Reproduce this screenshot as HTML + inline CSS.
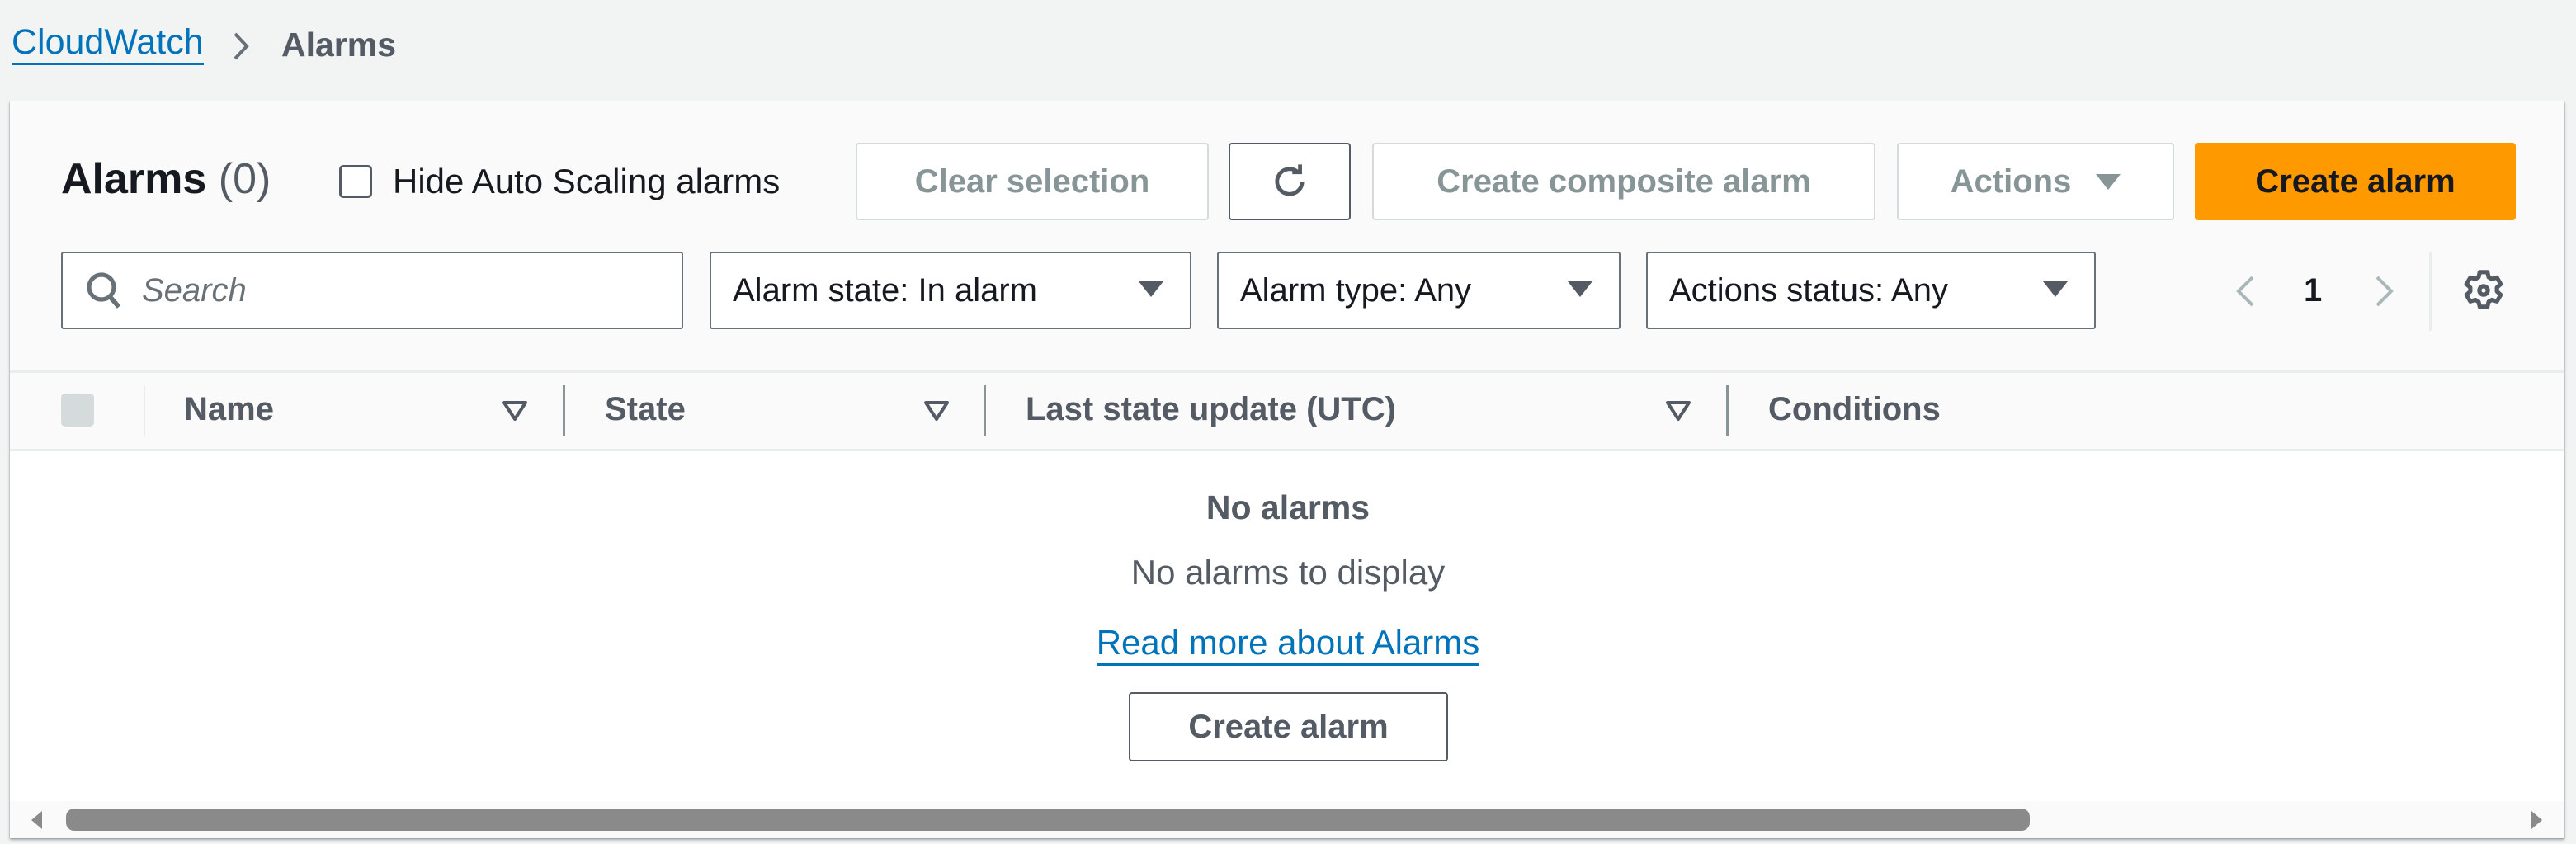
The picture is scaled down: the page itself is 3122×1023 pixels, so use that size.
<!DOCTYPE html>
<html><head><meta charset="utf-8"><style>
*{box-sizing:border-box;margin:0;padding:0}
body{width:3122px;height:1023px;background:#f2f3f3;font-family:"Liberation Sans",sans-serif;position:relative;overflow:hidden;color:#16191f}
.a{position:absolute}
.btn{position:absolute;border:2px solid #d5dbdb;border-radius:4px;background:#fff;color:#879596;font-weight:bold;font-size:40px;display:flex;align-items:center;justify-content:center}
.sel{position:absolute;border:2px solid #687078;border-radius:3px;background:#fff;font-size:40px;display:flex;align-items:center;padding-left:26px}
.car{position:absolute;right:32px;top:34px;width:0;height:0;border-left:15px solid transparent;border-right:15px solid transparent;border-top:19px solid #545b64}
.th{position:absolute;top:474px;font-size:40px;font-weight:bold;color:#545b64}
.dv{position:absolute;top:467px;width:3px;height:62px;background:#879596}
.srt{position:absolute;top:484px}
</style></head><body>
<div class="a" style="left:14px;top:26px;font-size:43px;color:#0073bb;line-height:50px;border-bottom:3px solid #0073bb">CloudWatch</div>
<svg class="a" style="left:280px;top:38px" width="24" height="36" viewBox="0 0 24 36"><path d="M5 3 L19 18 L5 33" fill="none" stroke="#687078" stroke-width="4"/></svg>
<div class="a" style="left:341px;top:31px;font-size:41px;font-weight:bold;color:#545b64">Alarms</div>

<div class="a" style="left:12px;top:123px;width:3096px;height:893px;background:#fafafa;box-shadow:0 2px 3px rgba(0,28,36,.35),0 0 1px rgba(0,28,36,.4)">
 <div class="a" style="left:0;top:421px;width:100%;height:428px;background:#fff;border-top:3px solid #eaeded"></div>
 <div class="a" style="left:0;top:326px;width:100%;border-top:3px solid #eaeded"></div>
</div>

<div class="a" style="left:74px;top:187px;font-size:52px;font-weight:bold;line-height:60px">Alarms <span style="font-weight:normal;color:#545b64">(0)</span></div>
<div class="a" style="left:411px;top:200px;width:40px;height:40px;border:3px solid #545b64;border-radius:5px;background:#fff"></div>
<div class="a" style="left:476px;top:195px;font-size:42px;line-height:50px">Hide Auto Scaling alarms</div>

<div class="btn" style="left:1037px;top:173px;width:428px;height:94px">Clear selection</div>
<div class="btn" style="left:1489px;top:173px;width:148px;height:94px;border-color:#545b64">
<svg width="52" height="52" viewBox="0 0 24 24"><path d="M19 12a7 7 0 1 1-2.2-5.1" fill="none" stroke="#545b64" stroke-width="2.2"/><path d="M13.5 6.8h4.3V2.5" fill="none" stroke="#545b64" stroke-width="2.2"/></svg></div>
<div class="btn" style="left:1663px;top:173px;width:610px;height:94px">Create composite alarm</div>
<div class="btn" style="left:2299px;top:173px;width:336px;height:94px">Actions<span style="display:inline-block;margin-left:30px;width:0;height:0;border-left:15px solid transparent;border-right:15px solid transparent;border-top:19px solid #879596"></span></div>
<div class="btn" style="left:2660px;top:173px;width:389px;height:94px;background:#ff9900;border-color:#ff9900;color:#16191f">Create alarm</div>

<div class="sel" style="left:74px;top:305px;width:754px;height:94px;padding-left:28px">
<svg width="44" height="48" viewBox="0 0 22 24"><circle cx="9.5" cy="10" r="7.5" fill="none" stroke="#687078" stroke-width="2.6"/><path d="M14.8 16 L20 22" stroke="#687078" stroke-width="2.8"/></svg>
<span style="margin-left:24px;font-style:italic;color:#687078">Search</span></div>
<div class="sel" style="left:860px;top:305px;width:584px;height:94px">Alarm state: In alarm<div class="car"></div></div>
<div class="sel" style="left:1475px;top:305px;width:489px;height:94px">Alarm type: Any<div class="car"></div></div>
<div class="sel" style="left:1995px;top:305px;width:545px;height:94px">Actions status: Any<div class="car"></div></div>

<svg class="a" style="left:2708px;top:333px" width="26" height="40" viewBox="0 0 26 40"><path d="M22 3 L5 20 L22 37" fill="none" stroke="#aab7b8" stroke-width="4"/></svg>
<div class="a" style="left:2792px;top:330px;font-size:40px;font-weight:bold">1</div>
<svg class="a" style="left:2877px;top:333px" width="26" height="40" viewBox="0 0 26 40"><path d="M4 3 L21 20 L4 37" fill="none" stroke="#aab7b8" stroke-width="4"/></svg>
<div class="a" style="left:2944px;top:305px;width:3px;height:96px;background:#eaeded"></div>
<svg class="a" style="left:2982px;top:324px" width="56" height="56" viewBox="0 0 24 24"><path d="M10 2.5h4l.6 2.6 1.7 1 2.6-.8 2 3.4-2 1.8v2l2 1.8-2 3.4-2.6-.8-1.7 1-.6 2.6h-4l-.6-2.6-1.7-1-2.6.8-2-3.4 2-1.8v-2l-2-1.8 2-3.4 2.6.8 1.7-1z" fill="none" stroke="#545b64" stroke-width="2.2" stroke-linejoin="round"/><circle cx="12" cy="12" r="2.2" fill="none" stroke="#545b64" stroke-width="2.2"/></svg>

<div class="a" style="left:74px;top:477px;width:40px;height:40px;background:#d5dbdb;border-radius:5px"></div>
<div class="a" style="left:174px;top:467px;width:2px;height:62px;background:#eaeded"></div>
<div class="th" style="left:223px">Name</div>
<svg class="srt" style="left:607px" width="34" height="28" viewBox="0 0 34 28"><path d="M4 4 H30 L17 24 Z" fill="none" stroke="#545b64" stroke-width="4" stroke-linejoin="round"/></svg>
<div class="dv" style="left:682px"></div>
<div class="th" style="left:733px">State</div>
<svg class="srt" style="left:1118px" width="34" height="28" viewBox="0 0 34 28"><path d="M4 4 H30 L17 24 Z" fill="none" stroke="#545b64" stroke-width="4" stroke-linejoin="round"/></svg>
<div class="dv" style="left:1192px"></div>
<div class="th" style="left:1243px">Last state update (UTC)</div>
<svg class="srt" style="left:2017px" width="34" height="28" viewBox="0 0 34 28"><path d="M4 4 H30 L17 24 Z" fill="none" stroke="#545b64" stroke-width="4" stroke-linejoin="round"/></svg>
<div class="dv" style="left:2092px"></div>
<div class="th" style="left:2143px">Conditions</div>

<div class="a" style="left:0;width:3122px;top:592px;text-align:center;font-size:41px;font-weight:bold;color:#545b64">No alarms</div>
<div class="a" style="left:0;width:3122px;top:670px;text-align:center;font-size:42px;color:#545b64">No alarms to display</div>
<div class="a" style="left:0;width:3122px;top:755px;text-align:center;font-size:42px;color:#0073bb"><span style="border-bottom:3px solid #0073bb;padding-bottom:2px">Read more about Alarms</span></div>
<div class="btn" style="left:1368px;top:839px;width:387px;height:84px;border-color:#545b64;color:#545b64">Create alarm</div>

<div class="a" style="left:12px;top:971px;width:3096px;height:45px;background:#fafafa"></div>
<div class="a" style="left:80px;top:980px;width:2380px;height:27px;background:#8a8a8a;border-radius:10px"></div>
<div class="a" style="left:38px;top:983px;width:0;height:0;border-top:11px solid transparent;border-bottom:11px solid transparent;border-right:13px solid #8a8a8a"></div>
<div class="a" style="left:3068px;top:983px;width:0;height:0;border-top:11px solid transparent;border-bottom:11px solid transparent;border-left:13px solid #8a8a8a"></div>
</body></html>
